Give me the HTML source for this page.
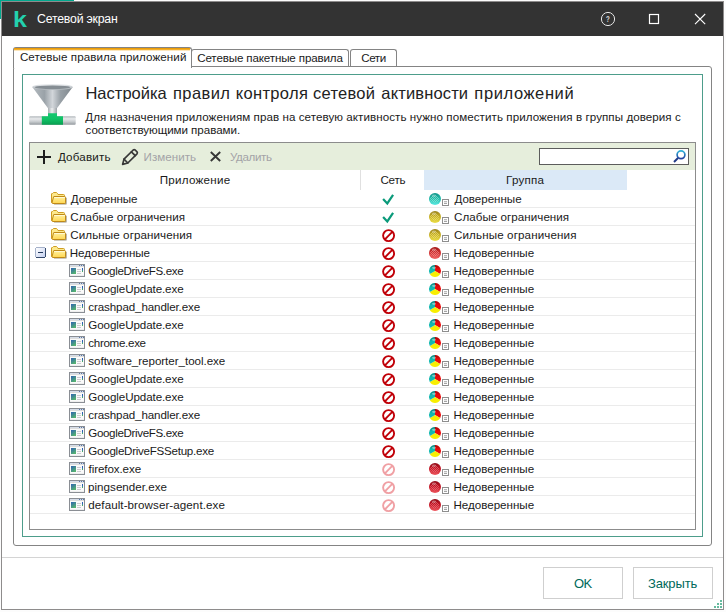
<!DOCTYPE html>
<html lang="ru"><head><meta charset="utf-8"><title>Сетевой экран</title>
<style>
html,body{margin:0;padding:0;}
body{width:726px;height:612px;overflow:hidden;background:#fcfcfc;position:relative;font-family:"Liberation Sans",sans-serif;}
.abs{position:absolute;}
.t{position:absolute;white-space:pre;line-height:20px;height:20px;}
#bgteal1{left:0;top:0;width:74px;height:1px;background:#00a88e;}
#bgteal2{left:0;top:0;width:1px;height:19px;background:#00a88e;}
#win{left:1px;top:1px;width:723px;height:609px;border:1px solid #8e8c8c;background:#fff;box-sizing:border-box;}
#tbar{left:2px;top:2px;width:721px;height:34px;background:#333333;}
#sep{left:2px;top:557px;width:721px;height:1px;background:#d4d4d4;}
.btn{box-sizing:border-box;border:1px solid #cfcfcf;background:#fff;height:32px;top:567px;}
#pane{left:13px;top:66px;width:699px;height:480px;border:1px solid #848484;border-radius:3px;box-sizing:border-box;background:#fff;}
.tab{box-sizing:border-box;border:1px solid #848484;border-bottom:none;border-radius:3px 3px 0 0;background:#fff;}
#t1{left:13px;top:47px;width:179px;height:21px;}
#t1o{left:14px;top:48px;width:176px;height:3px;background:linear-gradient(#e89600,#f0a618 45%,#fbd998 75%,#ffffff);}
#t2{left:191px;top:49px;width:158px;height:17px;}
#t3{left:350px;top:49px;width:47px;height:17px;}
#inner{left:22px;top:74px;width:681px;height:463px;border:1px solid #4d9d8b;box-sizing:border-box;background:#fff;}
#list{left:29px;top:142px;width:667px;height:388px;border:1px solid #8c8c8c;box-sizing:border-box;background:#fff;}
#tool{left:30px;top:143px;width:665px;height:27px;background:#e6eedc;}
#search{left:539px;top:148px;width:150px;height:17px;border:1px solid #5c5c5c;box-sizing:border-box;background:#fff;}
#hsel{left:424px;top:170px;width:203px;height:20px;background:#dbe9f7;}
#colsep{left:360px;top:170px;width:1px;height:20px;background:#e0e0e0;}
.rl{position:absolute;left:30px;width:665px;height:1px;background:#ebebeb;}
svg{position:absolute;left:0;top:0;overflow:visible;}
</style></head><body>
<div id="bgteal1" class="abs"></div><div id="bgteal2" class="abs"></div>
<div id="win" class="abs"></div>
<div id="tbar" class="abs"></div>
<div id="pane" class="abs"></div>
<div id="t2" class="abs tab"></div>
<div id="t3" class="abs tab"></div>
<div id="t1" class="abs tab"></div><div id="t1o" class="abs"></div>
<div id="inner" class="abs"></div>
<div id="list" class="abs"></div>
<div id="tool" class="abs"></div>
<div id="search" class="abs"></div>
<div id="hsel" class="abs"></div>
<div id="colsep" class="abs"></div>
<div class="rl" style="top:207px"></div><div class="rl" style="top:225px"></div><div class="rl" style="top:243px"></div><div class="rl" style="top:261px"></div><div class="rl" style="top:279px"></div><div class="rl" style="top:297px"></div><div class="rl" style="top:315px"></div><div class="rl" style="top:333px"></div><div class="rl" style="top:351px"></div><div class="rl" style="top:369px"></div><div class="rl" style="top:387px"></div><div class="rl" style="top:405px"></div><div class="rl" style="top:423px"></div><div class="rl" style="top:441px"></div><div class="rl" style="top:459px"></div><div class="rl" style="top:477px"></div><div class="rl" style="top:495px"></div><div class="rl" style="top:513px"></div>
<div id="sep" class="abs"></div>
<div class="abs btn" style="left:543px;width:80px"></div>
<div class="abs btn" style="left:633px;width:80px"></div>
<svg width="726" height="612" viewBox="0 0 726 612">
<defs>
<linearGradient id="gFold" x1="0" y1="0" x2="0" y2="1"><stop offset="0" stop-color="#fff2a4"/><stop offset="1" stop-color="#ffd650"/></linearGradient>
<linearGradient id="gMinus" x1="0" y1="0" x2="1" y2="1"><stop offset="0" stop-color="#ffffff"/><stop offset="1" stop-color="#c4d0f0"/></linearGradient>
<linearGradient id="gApp" x1="0" y1="0" x2="0.6" y2="1"><stop offset="0" stop-color="#2f62b4"/><stop offset="1" stop-color="#55b36f"/></linearGradient>
<linearGradient id="gMag" x1="0" y1="0" x2="0" y2="1"><stop offset="0" stop-color="#2fb2d8"/><stop offset="1" stop-color="#2440a0"/></linearGradient>
<radialGradient id="gTeal" cx="0.45" cy="0.35" r="0.7"><stop offset="0" stop-color="#7fe6dc"/><stop offset="0.6" stop-color="#2fc4b6"/><stop offset="1" stop-color="#1a9e96"/></radialGradient>
<radialGradient id="gYel" cx="0.45" cy="0.35" r="0.7"><stop offset="0" stop-color="#f0e070"/><stop offset="0.6" stop-color="#d8c032"/><stop offset="1" stop-color="#b09a20"/></radialGradient>
<radialGradient id="gRed" cx="0.45" cy="0.35" r="0.7"><stop offset="0" stop-color="#f08080"/><stop offset="0.6" stop-color="#d84040"/><stop offset="1" stop-color="#b02020"/></radialGradient>
<radialGradient id="gDred" cx="0.45" cy="0.35" r="0.7"><stop offset="0" stop-color="#e05058"/><stop offset="0.6" stop-color="#c82030"/><stop offset="1" stop-color="#a01020"/></radialGradient>
<radialGradient id="gShine" cx="0.4" cy="0.25" r="0.6"><stop offset="0" stop-color="#ffffff" stop-opacity="0.55"/><stop offset="1" stop-color="#ffffff" stop-opacity="0"/></radialGradient>
<linearGradient id="gCone" x1="0" y1="0" x2="1" y2="0"><stop offset="0" stop-color="#b4bbc0"/><stop offset="0.3" stop-color="#9aa2a8"/><stop offset="0.5" stop-color="#d2d6da"/><stop offset="0.7" stop-color="#98a0a6"/><stop offset="1" stop-color="#7f878d"/></linearGradient>
<linearGradient id="gRim" x1="0" y1="0" x2="0" y2="1"><stop offset="0" stop-color="#eef0f2"/><stop offset="0.5" stop-color="#c9ced2"/><stop offset="1" stop-color="#aab1b6"/></linearGradient>
<linearGradient id="gPipe" x1="0" y1="0" x2="0" y2="1"><stop offset="0" stop-color="#b0b6ba"/><stop offset="0.3" stop-color="#e8eaec"/><stop offset="0.65" stop-color="#c6cacd"/><stop offset="1" stop-color="#92989d"/></linearGradient>
<linearGradient id="gNeck" x1="0" y1="0" x2="1" y2="0"><stop offset="0" stop-color="#a8aeb2"/><stop offset="0.45" stop-color="#eceeef"/><stop offset="1" stop-color="#9aa0a5"/></linearGradient>
<linearGradient id="gGreen" x1="0" y1="0" x2="0" y2="1"><stop offset="0" stop-color="#14c870"/><stop offset="0.5" stop-color="#10c266"/><stop offset="1" stop-color="#089e50"/></linearGradient>
<g id="folder">
 <path d="M3.5 5.5 L15 5.5 Q15.6 5.5 15.6 6.2 L15.6 12 Q15.6 12.6 15 12.6 L3 12.6 Z" fill="#4a3c18" opacity="0.55"/>
 <path d="M0.5 2 Q0.5 1.5 1 1.5 L1.5 1.5 L2.5 0.5 L5.5 0.5 L6.5 1.5 L7 2.5 L12.5 2.5 Q13.5 2.5 13.5 3.5 L13.5 10.5 L0.5 10.5 Z" fill="#fde98c" stroke="#cf9d22" stroke-width="1"/>
 <path d="M3 4.5 L13.5 4.5 Q14.5 4.5 14.5 5.5 L14.5 10.5 Q14.5 11.5 13.5 11.5 L2 11.5 Q1 11.5 1 10.8 L2.5 5 Q2.6 4.5 3 4.5 Z" fill="url(#gFold)" stroke="#c08a18" stroke-width="1"/>
 <rect x="3.2" y="5.1" width="10.6" height="0.9" fill="#fffbe0" opacity="0.9"/>
</g>
<g id="minus">
 <rect x="1" y="1" width="9" height="9" fill="url(#gMinus)"/>
 <rect x="1" y="0" width="9" height="1" fill="#a6b2ca"/><rect x="0" y="1" width="1" height="9" fill="#a6b2ca"/>
 <rect x="1" y="10" width="9" height="1" fill="#34496b"/><rect x="10" y="1" width="1" height="9" fill="#34496b"/>
 <rect x="3" y="5" width="5" height="1" fill="#22385c"/>
</g>
<g id="app">
 <rect x="0.5" y="0.5" width="15" height="12" fill="#fafafa" stroke="#8a8e94" stroke-width="1"/>
 <rect x="1" y="1" width="14" height="1" fill="#d6dde8"/>
 <rect x="1" y="2" width="14" height="1" fill="#dcdcdc"/>
 <rect x="10" y="1" width="1" height="1" fill="#5a78a8"/><rect x="12" y="1" width="1" height="1" fill="#5a78a8"/><rect x="14" y="1" width="1" height="1" fill="#5a78a8"/>
 <rect x="2" y="4" width="5" height="6" fill="url(#gApp)"/>
 <rect x="8" y="5" width="4" height="1" fill="#cbcbcf"/><rect x="8" y="7" width="4" height="1" fill="#cbcbcf"/><rect x="8" y="9" width="4" height="1" fill="#cbcbcf"/>
 <rect x="13" y="4" width="1" height="2" fill="#2c60b4"/><rect x="13" y="6" width="1" height="1" fill="#3a88a0"/><rect x="13" y="7" width="1" height="1" fill="#4cae62"/>
 <rect x="1" y="11" width="14" height="1" fill="#eeeeee"/>
</g>
<g id="check"><path d="M1.1 5.9 L5.3 10.4 L11.1 1.9" fill="none" stroke="#0a9a7a" stroke-width="2.2" stroke-linejoin="miter"/></g>
<g id="ban"><circle cx="6.6" cy="6.6" r="5.5" fill="none" stroke="#c00008" stroke-width="1.9"/><path d="M2.9 10.3 L10.3 2.9" stroke="#c00008" stroke-width="1.9"/></g>
<g id="banf"><circle cx="6.6" cy="6.6" r="5.5" fill="none" stroke="#f0a0a4" stroke-width="1.9"/><path d="M2.9 10.3 L10.3 2.9" stroke="#f0a0a4" stroke-width="1.9"/></g>
<linearGradient id="gb-teal" x1="0" y1="0" x2="0" y2="1"><stop offset="0" stop-color="#0f9488"/><stop offset="0.45" stop-color="#22b8a8"/><stop offset="1" stop-color="#5cece4"/></linearGradient>
<pattern id="pt-teal" width="2" height="2" patternUnits="userSpaceOnUse"><rect x="0" y="0" width="1" height="1" fill="#a8f4e0"/><rect x="1" y="1" width="1" height="1" fill="#a8f4e0"/></pattern>
<g id="ball-teal"><circle cx="6" cy="6" r="6" fill="url(#gb-teal)"/><ellipse cx="5.6" cy="6" rx="4.6" ry="3.6" fill="url(#pt-teal)" opacity="0.55"/><ellipse cx="5" cy="2.6" rx="2.2" ry="1.2" fill="#fff" opacity="0.35"/></g>
<linearGradient id="gb-yellow" x1="0" y1="0" x2="0" y2="1"><stop offset="0" stop-color="#98801a"/><stop offset="0.45" stop-color="#c6ae24"/><stop offset="1" stop-color="#ece048"/></linearGradient>
<pattern id="pt-yellow" width="2" height="2" patternUnits="userSpaceOnUse"><rect x="0" y="0" width="1" height="1" fill="#f4ec90"/><rect x="1" y="1" width="1" height="1" fill="#f4ec90"/></pattern>
<g id="ball-yellow"><circle cx="6" cy="6" r="6" fill="url(#gb-yellow)"/><ellipse cx="5.6" cy="6" rx="4.6" ry="3.6" fill="url(#pt-yellow)" opacity="0.55"/><ellipse cx="5" cy="2.6" rx="2.2" ry="1.2" fill="#fff" opacity="0.35"/></g>
<linearGradient id="gb-red" x1="0" y1="0" x2="0" y2="1"><stop offset="0" stop-color="#a01414"/><stop offset="0.45" stop-color="#d03030"/><stop offset="1" stop-color="#f06868"/></linearGradient>
<pattern id="pt-red" width="2" height="2" patternUnits="userSpaceOnUse"><rect x="0" y="0" width="1" height="1" fill="#f8a8a8"/><rect x="1" y="1" width="1" height="1" fill="#f8a8a8"/></pattern>
<g id="ball-red"><circle cx="6" cy="6" r="6" fill="url(#gb-red)"/><ellipse cx="5.6" cy="6" rx="4.6" ry="3.6" fill="url(#pt-red)" opacity="0.55"/><ellipse cx="5" cy="2.6" rx="2.2" ry="1.2" fill="#fff" opacity="0.35"/></g>
<linearGradient id="gb-dred" x1="0" y1="0" x2="0" y2="1"><stop offset="0" stop-color="#8c0814"/><stop offset="0.45" stop-color="#c41424"/><stop offset="1" stop-color="#ee5860"/></linearGradient>
<pattern id="pt-dred" width="2" height="2" patternUnits="userSpaceOnUse"><rect x="0" y="0" width="1" height="1" fill="#f08890"/><rect x="1" y="1" width="1" height="1" fill="#f08890"/></pattern>
<g id="ball-dred"><circle cx="6" cy="6" r="6" fill="url(#gb-dred)"/><ellipse cx="5.6" cy="6" rx="4.6" ry="3.6" fill="url(#pt-dred)" opacity="0.55"/><ellipse cx="5" cy="2.6" rx="2.2" ry="1.2" fill="#fff" opacity="0.35"/></g>
<linearGradient id="gDark" x1="0" y1="0" x2="0" y2="1"><stop offset="0" stop-color="#000" stop-opacity="0.32"/><stop offset="0.35" stop-color="#000" stop-opacity="0"/></linearGradient>
<g id="ball-multi">
 <path d="M6 6 L6 0 A6 6 0 0 1 11.2 9 Z" fill="#ea0a0a"/>
 <path d="M6 6 L11.2 9 A6 6 0 0 1 0.8 9 Z" fill="#f8ee00"/>
 <path d="M6 6 L0.8 9 A6 6 0 0 1 6 0 Z" fill="#12b8b0"/>
 <circle cx="6" cy="6" r="6" fill="url(#gDark)"/>
 <ellipse cx="5" cy="2.8" rx="2" ry="1.1" fill="#fff" opacity="0.45"/>
</g>
<g id="mini"><rect x="0.5" y="0.5" width="6" height="6" fill="#ffffff" stroke="#8e8e8e" stroke-width="1"/><rect x="2" y="2.4" width="3" height="0.8" fill="#8e8e8e"/><rect x="2" y="4.2" width="3" height="0.8" fill="#8e8e8e"/></g>

</defs>
<!-- title bar buttons -->
<circle cx="608" cy="19" r="6.6" fill="none" stroke="#e6e6e6" stroke-width="1"/>
<text x="607.9" y="22.1" font-family="Liberation Sans, sans-serif" font-size="8.4" font-weight="bold" fill="#d6d6d6" text-anchor="middle" textLength="3.8" lengthAdjust="spacingAndGlyphs">?</text>
<rect x="649.5" y="14.5" width="9" height="9" fill="none" stroke="#ffffff" stroke-width="1.2"/>
<path d="M695 14 L705.2 24.2 M705.2 14 L695 24.2" stroke="#ffffff" stroke-width="1.1" fill="none"/>
<!-- funnel -->
<path d="M32.3 87 L72.7 87 L57 108.2 L57 114 L48 114 L48 108.2 Z" fill="url(#gCone)"/>
<rect x="48" y="108" width="9" height="7" fill="url(#gNeck)"/>
<ellipse cx="52.5" cy="87" rx="20.2" ry="3.1" fill="url(#gRim)"/>
<ellipse cx="52.5" cy="87.2" rx="17.8" ry="1.8" fill="#858d93"/>
<rect x="29.2" y="116.2" width="46.5" height="8.6" rx="1" fill="url(#gPipe)"/>
<path d="M41.8 116.2 L48 116.2 L48 113.3 L57 113.3 L57 116.2 L63 116.2 L63 124.8 L41.8 124.8 Z" fill="url(#gGreen)"/>
<!-- toolbar icons -->
<rect x="43" y="150" width="2" height="14" fill="#1e1e1e"/><rect x="37" y="156" width="14" height="2" fill="#1e1e1e"/>
<g fill="none" stroke="#383838" stroke-width="1.7" stroke-linejoin="round" stroke-linecap="round">
 <path d="M122.6 164.4 L124 159.2 L133.2 150 Q134.2 149.2 135.2 150 L137 151.8 Q137.8 152.8 137 153.8 L127.8 163 Z"/>
 <path d="M131.4 151.8 L135.2 155.6"/>
 <path d="M124 159.2 L127.8 163"/>
</g>
<path d="M210.8 152 L220.2 161 M220.2 152 L210.8 161" stroke="#363636" stroke-width="1.9" fill="none"/>
<!-- search magnifier -->
<circle cx="681" cy="154.8" r="3.9" fill="#ffffff" stroke="url(#gMag)" stroke-width="1.7"/>
<path d="M678 158 L674 162" stroke="#213a86" stroke-width="2" fill="none"/>
<!-- resize grip -->
<g fill="#66bb9f">
<rect x="720" y="600" width="2" height="2"/>
<rect x="717" y="603" width="2" height="2"/><rect x="720" y="603" width="2" height="2"/>
<rect x="714" y="606" width="2" height="2"/><rect x="717" y="606" width="2" height="2"/><rect x="720" y="606" width="2" height="2"/>
</g>

<use href="#folder" x="51" y="192"/>
<use href="#check" x="382" y="193"/>
<use href="#ball-teal" x="429" y="193"/>
<use href="#mini" x="442" y="199"/>
<use href="#folder" x="51" y="210"/>
<use href="#check" x="382" y="211"/>
<use href="#ball-yellow" x="429" y="211"/>
<use href="#mini" x="442" y="217"/>
<use href="#folder" x="51" y="228"/>
<use href="#ban" x="382" y="229"/>
<use href="#ball-yellow" x="429" y="229"/>
<use href="#mini" x="442" y="235"/>
<use href="#folder" x="51" y="246"/>
<use href="#minus" x="35" y="247"/>
<use href="#ban" x="382" y="247"/>
<use href="#ball-red" x="429" y="247"/>
<use href="#mini" x="442" y="253"/>
<use href="#app" x="69" y="264"/>
<use href="#ban" x="382" y="265"/>
<use href="#ball-multi" x="429" y="265"/>
<use href="#mini" x="442" y="271"/>
<use href="#app" x="69" y="282"/>
<use href="#ban" x="382" y="283"/>
<use href="#ball-multi" x="429" y="283"/>
<use href="#mini" x="442" y="289"/>
<use href="#app" x="69" y="300"/>
<use href="#ban" x="382" y="301"/>
<use href="#ball-multi" x="429" y="301"/>
<use href="#mini" x="442" y="307"/>
<use href="#app" x="69" y="318"/>
<use href="#ban" x="382" y="319"/>
<use href="#ball-multi" x="429" y="319"/>
<use href="#mini" x="442" y="325"/>
<use href="#app" x="69" y="336"/>
<use href="#ban" x="382" y="337"/>
<use href="#ball-multi" x="429" y="337"/>
<use href="#mini" x="442" y="343"/>
<use href="#app" x="69" y="354"/>
<use href="#ban" x="382" y="355"/>
<use href="#ball-multi" x="429" y="355"/>
<use href="#mini" x="442" y="361"/>
<use href="#app" x="69" y="372"/>
<use href="#ban" x="382" y="373"/>
<use href="#ball-multi" x="429" y="373"/>
<use href="#mini" x="442" y="379"/>
<use href="#app" x="69" y="390"/>
<use href="#ban" x="382" y="391"/>
<use href="#ball-multi" x="429" y="391"/>
<use href="#mini" x="442" y="397"/>
<use href="#app" x="69" y="408"/>
<use href="#ban" x="382" y="409"/>
<use href="#ball-multi" x="429" y="409"/>
<use href="#mini" x="442" y="415"/>
<use href="#app" x="69" y="426"/>
<use href="#ban" x="382" y="427"/>
<use href="#ball-multi" x="429" y="427"/>
<use href="#mini" x="442" y="433"/>
<use href="#app" x="69" y="444"/>
<use href="#ban" x="382" y="445"/>
<use href="#ball-multi" x="429" y="445"/>
<use href="#mini" x="442" y="451"/>
<use href="#app" x="69" y="462"/>
<use href="#banf" x="382" y="463"/>
<use href="#ball-dred" x="429" y="463"/>
<use href="#mini" x="442" y="469"/>
<use href="#app" x="69" y="480"/>
<use href="#banf" x="382" y="481"/>
<use href="#ball-dred" x="429" y="481"/>
<use href="#mini" x="442" y="487"/>
<use href="#app" x="69" y="498"/>
<use href="#banf" x="382" y="499"/>
<use href="#ball-dred" x="429" y="499"/>
<use href="#mini" x="442" y="505"/>
</svg>
<span id="title" class="t" style="left:37.05px;top:9.04px;font-size:12.3px;color:#ffffff;letter-spacing:-0.212px;">Сетевой экран</span>
<span id="tab1" class="t" style="left:19.90px;top:46.98px;font-size:11.6px;color:#1a1a1a;letter-spacing:0.082px;">Сетевые правила приложений</span>
<span id="tab2" class="t" style="left:197.20px;top:47.98px;font-size:11.6px;color:#1a1a1a;letter-spacing:-0.139px;">Сетевые пакетные правила</span>
<span id="tab3" class="t" style="left:361.30px;top:47.98px;font-size:11.6px;color:#1a1a1a;letter-spacing:-0.433px;">Сети</span>
<span id="head0" class="t" style="left:85.45px;top:82.68px;font-size:16.5px;color:#222222;letter-spacing:0.013px;">Настройка </span>
<span id="head1" class="t" style="left:172.95px;top:82.68px;font-size:16.5px;color:#222222;letter-spacing:0.420px;">правил </span>
<span id="head2" class="t" style="left:235.70px;top:82.68px;font-size:16.5px;color:#222222;letter-spacing:0.350px;">контроля </span>
<span id="head3" class="t" style="left:313.05px;top:82.68px;font-size:16.5px;color:#222222;letter-spacing:0.250px;">сетевой </span>
<span id="head4" class="t" style="left:381.35px;top:82.68px;font-size:16.5px;color:#222222;letter-spacing:0.144px;">активности </span>
<span id="head5" class="t" style="left:474.35px;top:82.68px;font-size:16.5px;color:#222222;letter-spacing:0.600px;">приложений</span>
<span id="desc1" class="t" style="left:85.30px;top:106.98px;font-size:11.6px;color:#1a1a1a;letter-spacing:0.063px;">Для назначения приложениям прав на сетевую активность нужно поместить приложения в группы доверия с</span>
<span id="desc2" class="t" style="left:85.50px;top:119.68px;font-size:11.6px;color:#1a1a1a;letter-spacing:-0.042px;">соответствующими правами.</span>
<span id="add" class="t" style="left:57.90px;top:146.98px;font-size:11.6px;color:#1a1a1a;letter-spacing:0.193px;">Добавить</span>
<span id="edit" class="t" style="left:143.60px;top:146.98px;font-size:11.6px;color:#a3a3a7;letter-spacing:0.036px;">Изменить</span>
<span id="del" class="t" style="left:229.90px;top:146.98px;font-size:11.6px;color:#a3a3a7;letter-spacing:-0.342px;">Удалить</span>
<span id="h1" class="t" style="left:159.70px;top:169.98px;font-size:11.6px;color:#1a1a1a;letter-spacing:0.267px;">Приложение</span>
<span id="h2" class="t" style="left:380.50px;top:169.98px;font-size:11.6px;color:#1a1a1a;letter-spacing:-0.250px;">Сеть</span>
<span id="h3" class="t" style="left:506.00px;top:169.98px;font-size:11.6px;color:#1a1a1a;letter-spacing:0.250px;">Группа</span>
<span id="ok" class="t" style="left:573.95px;top:573.80px;font-size:13px;color:#00695a;letter-spacing:-0.450px;">OK</span>
<span id="close" class="t" style="left:647.90px;top:573.80px;font-size:13px;color:#00695a;letter-spacing:-0.117px;">Закрыть</span>
<span id="n0" class="t" style="left:70.80px;top:188.98px;font-size:11.6px;color:#1a1a1a;letter-spacing:-0.078px;">Доверенные</span>
<span id="g0" class="t" style="left:454.50px;top:188.98px;font-size:11.6px;color:#1a1a1a;letter-spacing:-0.033px;">Доверенные</span>
<span id="n1" class="t" style="left:70.30px;top:206.98px;font-size:11.6px;color:#1a1a1a;letter-spacing:0.024px;">Слабые ограничения</span>
<span id="g1" class="t" style="left:454.00px;top:206.98px;font-size:11.6px;color:#1a1a1a;letter-spacing:0.047px;">Слабые ограничения</span>
<span id="n2" class="t" style="left:70.30px;top:224.98px;font-size:11.6px;color:#1a1a1a;letter-spacing:0.092px;">Сильные ограничения</span>
<span id="g2" class="t" style="left:454.00px;top:224.98px;font-size:11.6px;color:#1a1a1a;letter-spacing:0.125px;">Сильные ограничения</span>
<span id="n3" class="t" style="left:69.80px;top:242.98px;font-size:11.6px;color:#1a1a1a;letter-spacing:-0.050px;">Недоверенные</span>
<span id="g3" class="t" style="left:453.50px;top:242.98px;font-size:11.6px;color:#1a1a1a;letter-spacing:-0.014px;">Недоверенные</span>
<span id="n4" class="t" style="left:88.30px;top:260.98px;font-size:11.6px;color:#1a1a1a;letter-spacing:-0.366px;">GoogleDriveFS.exe</span>
<span id="g4" class="t" style="left:453.50px;top:260.98px;font-size:11.6px;color:#1a1a1a;letter-spacing:-0.014px;">Недоверенные</span>
<span id="n5" class="t" style="left:88.30px;top:278.98px;font-size:11.6px;color:#1a1a1a;letter-spacing:-0.090px;">GoogleUpdate.exe</span>
<span id="g5" class="t" style="left:453.50px;top:278.98px;font-size:11.6px;color:#1a1a1a;letter-spacing:-0.014px;">Недоверенные</span>
<span id="n6" class="t" style="left:88.30px;top:296.98px;font-size:11.6px;color:#1a1a1a;letter-spacing:-0.116px;">crashpad_handler.exe</span>
<span id="g6" class="t" style="left:453.50px;top:296.98px;font-size:11.6px;color:#1a1a1a;letter-spacing:-0.014px;">Недоверенные</span>
<span id="n7" class="t" style="left:88.30px;top:314.98px;font-size:11.6px;color:#1a1a1a;letter-spacing:-0.090px;">GoogleUpdate.exe</span>
<span id="g7" class="t" style="left:453.50px;top:314.98px;font-size:11.6px;color:#1a1a1a;letter-spacing:-0.014px;">Недоверенные</span>
<span id="n8" class="t" style="left:88.30px;top:332.98px;font-size:11.6px;color:#1a1a1a;letter-spacing:-0.311px;">chrome.exe</span>
<span id="g8" class="t" style="left:453.50px;top:332.98px;font-size:11.6px;color:#1a1a1a;letter-spacing:-0.014px;">Недоверенные</span>
<span id="n9" class="t" style="left:88.30px;top:350.98px;font-size:11.6px;color:#1a1a1a;letter-spacing:-0.036px;">software_reporter_tool.exe</span>
<span id="g9" class="t" style="left:453.50px;top:350.98px;font-size:11.6px;color:#1a1a1a;letter-spacing:-0.014px;">Недоверенные</span>
<span id="n10" class="t" style="left:88.30px;top:368.98px;font-size:11.6px;color:#1a1a1a;letter-spacing:-0.090px;">GoogleUpdate.exe</span>
<span id="g10" class="t" style="left:453.50px;top:368.98px;font-size:11.6px;color:#1a1a1a;letter-spacing:-0.014px;">Недоверенные</span>
<span id="n11" class="t" style="left:88.30px;top:386.98px;font-size:11.6px;color:#1a1a1a;letter-spacing:-0.090px;">GoogleUpdate.exe</span>
<span id="g11" class="t" style="left:453.50px;top:386.98px;font-size:11.6px;color:#1a1a1a;letter-spacing:-0.014px;">Недоверенные</span>
<span id="n12" class="t" style="left:88.30px;top:404.98px;font-size:11.6px;color:#1a1a1a;letter-spacing:-0.116px;">crashpad_handler.exe</span>
<span id="g12" class="t" style="left:453.50px;top:404.98px;font-size:11.6px;color:#1a1a1a;letter-spacing:-0.014px;">Недоверенные</span>
<span id="n13" class="t" style="left:88.30px;top:422.98px;font-size:11.6px;color:#1a1a1a;letter-spacing:-0.366px;">GoogleDriveFS.exe</span>
<span id="g13" class="t" style="left:453.50px;top:422.98px;font-size:11.6px;color:#1a1a1a;letter-spacing:-0.014px;">Недоверенные</span>
<span id="n14" class="t" style="left:88.30px;top:440.98px;font-size:11.6px;color:#1a1a1a;letter-spacing:-0.267px;">GoogleDriveFSSetup.exe</span>
<span id="g14" class="t" style="left:453.50px;top:440.98px;font-size:11.6px;color:#1a1a1a;letter-spacing:-0.014px;">Недоверенные</span>
<span id="n15" class="t" style="left:88.55px;top:458.98px;font-size:11.6px;color:#1a1a1a;letter-spacing:-0.095px;">firefox.exe</span>
<span id="g15" class="t" style="left:453.50px;top:458.98px;font-size:11.6px;color:#1a1a1a;letter-spacing:-0.014px;">Недоверенные</span>
<span id="n16" class="t" style="left:88.05px;top:476.98px;font-size:11.6px;color:#1a1a1a;letter-spacing:0.023px;">pingsender.exe</span>
<span id="g16" class="t" style="left:453.50px;top:476.98px;font-size:11.6px;color:#1a1a1a;letter-spacing:-0.014px;">Недоверенные</span>
<span id="n17" class="t" style="left:88.30px;top:494.98px;font-size:11.6px;color:#1a1a1a;letter-spacing:0.077px;">default-browser-agent.exe</span>
<span id="g17" class="t" style="left:453.50px;top:494.98px;font-size:11.6px;color:#1a1a1a;letter-spacing:-0.014px;">Недоверенные</span>
<span id="klogo" class="abs" style="left:13px;top:7.8px;font-size:21.6px;line-height:24px;font-weight:bold;color:#23d1ae;transform:scaleX(1.16);transform-origin:left top;">k</span>
</body></html>
